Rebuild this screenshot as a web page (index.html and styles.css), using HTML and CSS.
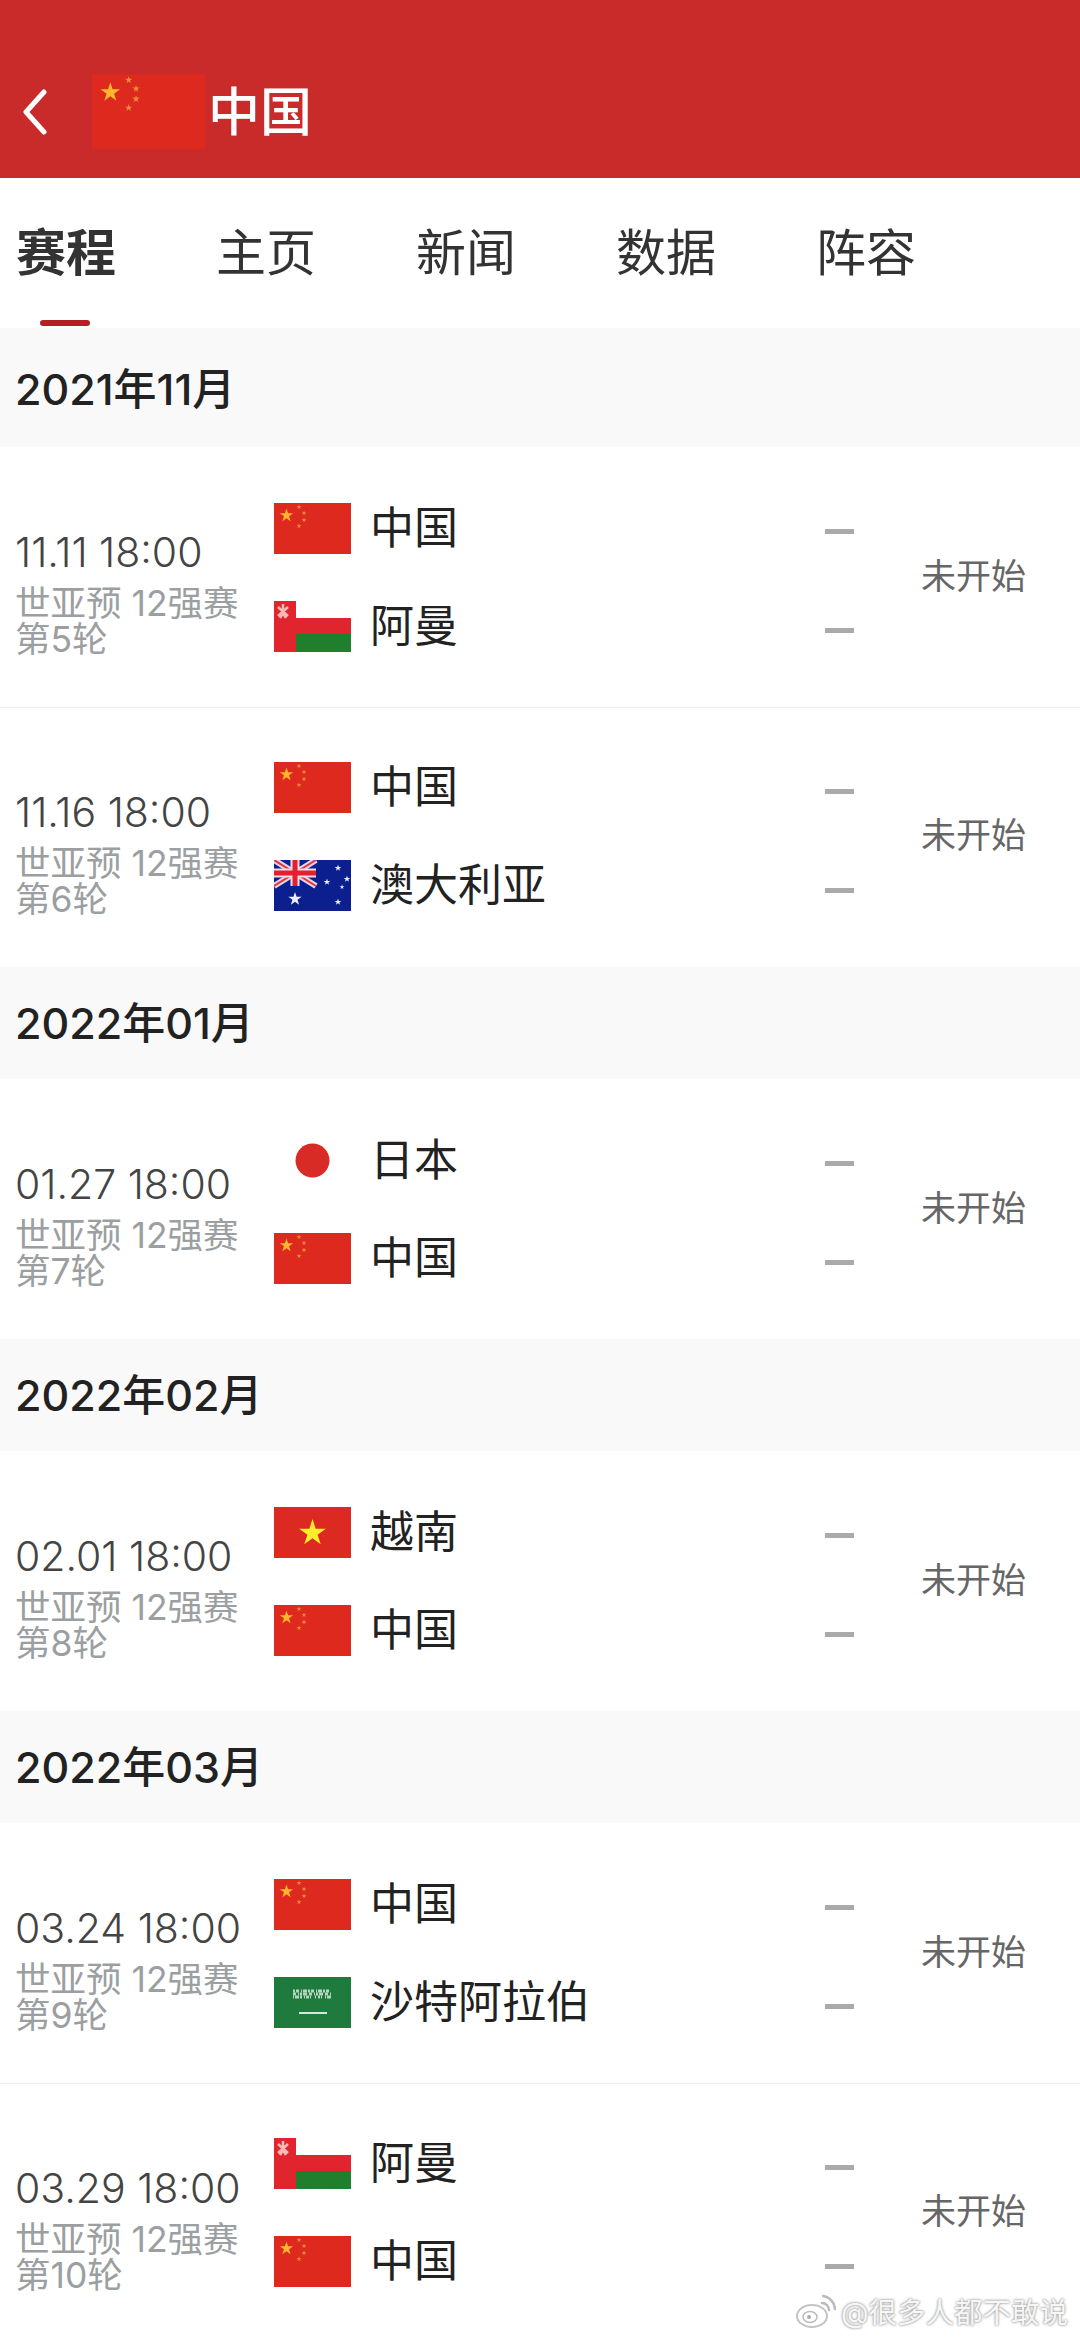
FILE: index.html
```html
<!DOCTYPE html>
<html lang="zh">
<head>
    <meta charset="UTF-8">
    <meta name="viewport" content="width=device-width, initial-scale=1.0">
    <title>中国 赛程</title>
    <link rel="stylesheet" href="styles.css">
</head>
<body>

    <!-- Banderas reutilizadas en las filas -->
    <svg class="defs" width="0" height="0">
        <defs>
            <polygon id="star" points="0,-1 .225,-.309 .951,-.309 .363,.118 .588,.809 0,.382 -.588,.809 -.363,.118 -.951,-.309 -.225,-.309"/>
            <symbol id="flag-cn" viewBox="0 0 77 51">
                <rect width="77" height="51" fill="#de2a1e"/>
                <use href="#star" transform="translate(12.500 12.500) scale(7)" fill="#fbb62c"/>
                <g fill="#ea8f3a">
                    <use href="#star" transform="translate(25 4) scale(2.600)"/>
                    <use href="#star" transform="translate(30 10) scale(2.600)"/>
                    <use href="#star" transform="translate(30 17) scale(2.600)"/>
                    <use href="#star" transform="translate(25 23) scale(2.600)"/>
                </g>
            </symbol>
            <symbol id="flag-om" viewBox="0 0 77 51">
                <rect width="77" height="51" fill="#e0252e"/>
                <rect x="22" width="55" height="17" fill="#fff"/>
                <rect x="22" y="33" width="55" height="18" fill="#1f7f2c"/>
                <path d="M4 6l10 9M14 6l-10 9M9 3v8M6 17l3-5 3 5" stroke="#f6b9b4" stroke-width="2.500" fill="none"/>
            </symbol>
            <symbol id="flag-au" viewBox="0 0 77 51">
                <rect width="77" height="51" fill="#0c1f8f"/>
                <path d="M0 0L42 26M42 0L0 26" stroke="#e8d5de" stroke-width="6"/>
                <path d="M0 0L42 26M42 0L0 26" stroke="#e0344a" stroke-width="2"/>
                <path d="M21 0V26M0 13H42" stroke="#f0dde2" stroke-width="9"/>
                <path d="M21 0V26M0 13H42" stroke="#e51f30" stroke-width="5"/>
                <g fill="#eef0ff">
                    <use href="#star" transform="translate(21 39) scale(7)"/>
                    <use href="#star" transform="translate(64 8) scale(3.500)"/>
                    <use href="#star" transform="translate(53 22) scale(3.500)"/>
                    <use href="#star" transform="translate(73 19) scale(3.500)"/>
                    <use href="#star" transform="translate(68 27) scale(2.500)"/>
                    <use href="#star" transform="translate(64 42) scale(3.500)"/>
                </g>
            </symbol>
            <symbol id="flag-jp" viewBox="0 0 77 51">
                <rect width="77" height="51" fill="#fff"/>
                <circle cx="38.500" cy="25.500" r="17" fill="#d92b26"/>
            </symbol>
            <symbol id="flag-vn" viewBox="0 0 77 51">
                <rect width="77" height="51" fill="#dc2a22"/>
                <use href="#star" transform="translate(38.500 26) scale(14)" fill="#fdee2c"/>
            </symbol>
            <symbol id="flag-sa" viewBox="0 0 77 51">
                <rect width="77" height="51" fill="#1f7a3d"/>
                <g fill="none" stroke="#b5d5bf" stroke-width="3">
                    <path d="M19 14H57" stroke-dasharray="2 1 3 2 1 1 4 1"/>
                    <path d="M19 17H57" stroke-dasharray="3 2 1 1 2 1 4 2"/>
                    <path d="M19 20H57" stroke-dasharray="1 1 4 1 2 2 1 1 3"/>
                </g>
                <path d="M25 36H53" stroke="#d4e8da" stroke-width="2"/>
            </symbol>
        </defs>
    </svg>

    <header class="topbar">
        <svg class="back" viewBox="0 0 26 46" width="26" height="46">
            <path d="M22 3L4 23L22 43" fill="none" stroke="#fff" stroke-width="5" stroke-linecap="round" stroke-linejoin="round"/>
        </svg>
        <svg class="topbar-flag" width="113" height="75"><use href="#flag-cn"/></svg>
        <span class="topbar-title">中国</span>
    </header>

    <nav class="tabs">
        <a class="tab active">赛程</a>
        <a class="tab">主页</a>
        <a class="tab">新闻</a>
        <a class="tab">数据</a>
        <a class="tab">阵容</a>
    </nav>

    <div class="month first">2021年11月</div>

    <div class="match">
        <div class="info">
            <div class="time">11.11 18:00</div>
            <div class="round">世亚预 12强赛<br>第5轮</div>
        </div>
        <div class="teams">
            <div class="team"><svg class="flag"><use href="#flag-cn"/></svg><span>中国</span></div>
            <div class="team"><svg class="flag"><use href="#flag-om"/></svg><span>阿曼</span></div>
        </div>
        <div class="scores"><i></i><i></i></div>
        <div class="status">未开始</div>
    </div>

    <div class="match">
        <div class="info">
            <div class="time">11.16 18:00</div>
            <div class="round">世亚预 12强赛<br>第6轮</div>
        </div>
        <div class="teams">
            <div class="team"><svg class="flag"><use href="#flag-cn"/></svg><span>中国</span></div>
            <div class="team"><svg class="flag"><use href="#flag-au"/></svg><span>澳大利亚</span></div>
        </div>
        <div class="scores"><i></i><i></i></div>
        <div class="status">未开始</div>
    </div>

    <div class="month">2022年01月</div>

    <div class="match">
        <div class="info">
            <div class="time">01.27 18:00</div>
            <div class="round">世亚预 12强赛<br>第7轮</div>
        </div>
        <div class="teams">
            <div class="team"><svg class="flag"><use href="#flag-jp"/></svg><span>日本</span></div>
            <div class="team"><svg class="flag"><use href="#flag-cn"/></svg><span>中国</span></div>
        </div>
        <div class="scores"><i></i><i></i></div>
        <div class="status">未开始</div>
    </div>

    <div class="month">2022年02月</div>

    <div class="match">
        <div class="info">
            <div class="time">02.01 18:00</div>
            <div class="round">世亚预 12强赛<br>第8轮</div>
        </div>
        <div class="teams">
            <div class="team"><svg class="flag"><use href="#flag-vn"/></svg><span>越南</span></div>
            <div class="team"><svg class="flag"><use href="#flag-cn"/></svg><span>中国</span></div>
        </div>
        <div class="scores"><i></i><i></i></div>
        <div class="status">未开始</div>
    </div>

    <div class="month">2022年03月</div>

    <div class="match">
        <div class="info">
            <div class="time">03.24 18:00</div>
            <div class="round">世亚预 12强赛<br>第9轮</div>
        </div>
        <div class="teams">
            <div class="team"><svg class="flag"><use href="#flag-cn"/></svg><span>中国</span></div>
            <div class="team"><svg class="flag"><use href="#flag-sa"/></svg><span>沙特阿拉伯</span></div>
        </div>
        <div class="scores"><i></i><i></i></div>
        <div class="status">未开始</div>
    </div>

    <div class="match">
        <div class="info">
            <div class="time">03.29 18:00</div>
            <div class="round">世亚预 12强赛<br>第10轮</div>
        </div>
        <div class="teams">
            <div class="team"><svg class="flag"><use href="#flag-om"/></svg><span>阿曼</span></div>
            <div class="team"><svg class="flag"><use href="#flag-cn"/></svg><span>中国</span></div>
        </div>
        <div class="scores"><i></i><i></i></div>
        <div class="status">未开始</div>
    </div>

    <!-- Marca de agua sobre la imagen -->
    <div class="watermark">
        <svg class="weibo" viewBox="0 0 40 36" width="40" height="36">
            <ellipse cx="16" cy="23" rx="15" ry="11" fill="#fff" stroke="#c4c4c4" stroke-width="2"/>
            <ellipse cx="14" cy="24" rx="7" ry="5.500" fill="none" stroke="#bbb" stroke-width="1.500"/>
            <circle cx="13" cy="24" r="2" fill="#aaa"/>
            <path d="M26 10a7 7 0 0 1 7 7M27 3a14 14 0 0 1 12 13" fill="none" stroke="#bbb" stroke-width="2.500" stroke-linecap="round"/>
        </svg>
        <span>@很多人都不敢说</span>
    </div>

</body>
</html>
```

FILE: styles.css
```css
html, body {
    height: 2338px;
    overflow: hidden;
}
body {
    position: relative;
    margin: 0;
    background-color: white;
    color: #222;
    font-family: Inter, "Noto Sans CJK SC", sans-serif;
}
.defs {
    display: block;
    height: 0;
}
.topbar {
    display: flex;
    align-items: center;
    height: 178px;
    padding: 45px 0 0 22px;
    box-sizing: border-box;
    background-color: #c92a2a;
}
.topbar-flag {
    margin-left: 44px;
}
.topbar-title {
    margin-left: 3px;
    padding-bottom: 7px;
    font-size: 52px;
    font-weight: 500;
    color: white;
}
.tabs {
    display: flex;
    height: 150px;
    padding-left: 16px;
    background-color: white;
}
.tab {
    position: relative;
    width: 200px;
    padding-top: 46px;
    font-size: 50px;
    line-height: 58px;
    color: #333;
}
.tab.active {
    font-weight: bold;
}
.tab.active:after {
    content: "";
    position: absolute;
    left: 24px;
    bottom: 2px;
    width: 50px;
    height: 6px;
    border-radius: 3px;
    background-color: #b32024;
}
.month {
    height: 112px;
    padding-left: 15px;
    background-color: #f9f9f9;
    font-size: 43px;
    font-weight: 500;
    line-height: 112px;
    color: #222;
}
.month.first {
    height: 119px;
    line-height: 122px;
}
.match {
    display: flex;
    align-items: center;
    height: 260px;
    box-sizing: border-box;
}
.match + .match {
    padding-bottom: 2px;
    border-top: 1px solid #eee;
}
.info {
    width: 274px;
    padding: 32px 0 0 15px;
    box-sizing: border-box;
}
.time {
    font-size: 41px;
    font-weight: 300;
    line-height: 48px;
    color: #444;
}
.round {
    margin-top: 10px;
    font-size: 35.500px;
    line-height: 36px;
    color: #9c9fa1;
}
.teams {
    display: flex;
    flex-direction: column;
    gap: 47px;
    width: 551px;
}
.team {
    display: flex;
    align-items: center;
    gap: 19px;
    height: 51px;
    font-size: 44px;
}
.team span {
    padding-bottom: 7px;
}
.flag {
    width: 77px;
    height: 51px;
    flex-shrink: 0;
}
.scores {
    display: flex;
    flex-direction: column;
    gap: 94px;
    width: 96px;
    padding-top: 8px;
}
.scores i {
    display: block;
    width: 29px;
    height: 5px;
    background-color: #aaa;
}
.status {
    padding-bottom: 8px;
    font-size: 35px;
    color: #666;
}
.watermark {
    position: absolute;
    right: 12px;
    bottom: 7px;
    display: flex;
    align-items: center;
    gap: 5px;
    font-size: 28.500px;
    color: #f6f6f6;
    text-shadow: 0 0 3px #999, 0 0 2px #aaa;
}
```
